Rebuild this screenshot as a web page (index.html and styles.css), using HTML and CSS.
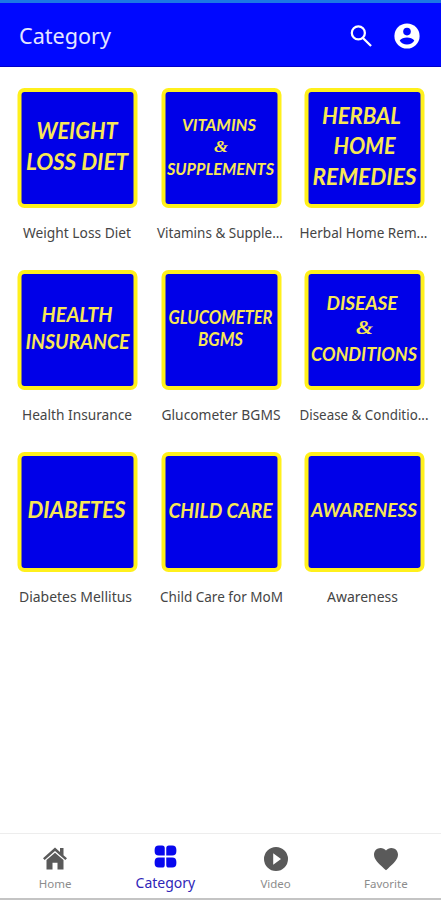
FILE: index.html
```html
<!DOCTYPE html>
<html lang="en">
<head>
<meta charset="utf-8">
<meta name="viewport" content="width=device-width">
<title>Category</title>
<link rel="stylesheet" href="styles.css">
</head>
<body>
<header class="bar">
  <h1><svg class="title" viewBox="0 0 94 36"><text x="1" y="25.500" textLength="92" lengthAdjust="spacingAndGlyphs">Category</text></svg></h1>
  <svg class="search" viewBox="0 0 24 24"><path fill="none" stroke="#fff" stroke-width="2" d="M13.500 13.500 20.500 20.500M15 8.800a5.800 5.800 0 1 1-11.600 0a5.800 5.800 0 0 1 11.600 0z"/></svg>
  <svg class="account" viewBox="0 0 26 26"><circle cx="13" cy="13" r="12.600" fill="#fff"/><circle cx="13" cy="8.600" r="3.800" fill="#0008ff"/><path fill="#0008ff" d="M5.700 17.600c1.200-2 4.600-3 7.300-3s6.100 1 7.300 3c-1.300 2.400-4.200 4-7.300 4s-6-1.600-7.300-4z"/></svg>
</header>
<main class="grid">
  <section class="card">
    <svg class="tile" viewBox="18 88 120 120"><rect class="frame" x="20" y="90" width="116" height="116" rx="5"/><g font-size="23"><text x="37" y="139" textLength="81" lengthAdjust="spacingAndGlyphs">WEIGHT</text><text x="26.500" y="170" textLength="102" lengthAdjust="spacingAndGlyphs">LOSS DIET</text></g></svg>
    <svg class="label" viewBox="6 222 143 24"><text x="23" y="238" textLength="108" lengthAdjust="spacingAndGlyphs">Weight Loss Diet</text></svg>
  </section>
  <section class="card">
    <svg class="tile" viewBox="161.500 88 120 120"><rect class="frame" x="163.500" y="90" width="116" height="116" rx="5"/><g font-size="17"><text x="182" y="130.500" textLength="74" lengthAdjust="spacingAndGlyphs">VITAMINS</text><text class="amp" x="214" y="152" textLength="14" lengthAdjust="spacingAndGlyphs">&amp;</text><text x="167" y="174.500" textLength="107" lengthAdjust="spacingAndGlyphs">SUPPLEMENTS</text></g></svg>
    <svg class="label" viewBox="149.500 222 143 24"><text x="156.500" y="238" textLength="126" lengthAdjust="spacingAndGlyphs">Vitamins &amp; Supple...</text></svg>
  </section>
  <section class="card">
    <svg class="tile" viewBox="304.500 88 120 120"><rect class="frame" x="306.500" y="90" width="116" height="116" rx="5"/><g font-size="22.500"><text x="322" y="123.500" textLength="79" lengthAdjust="spacingAndGlyphs">HERBAL</text><text x="333.500" y="154" textLength="62" lengthAdjust="spacingAndGlyphs">HOME</text><text x="312.500" y="185" textLength="104" lengthAdjust="spacingAndGlyphs">REMEDIES</text></g></svg>
    <svg class="label" viewBox="293 222 143 24"><text x="299.500" y="238" textLength="128" lengthAdjust="spacingAndGlyphs">Herbal Home Rem...</text></svg>
  </section>
  <section class="card">
    <svg class="tile" viewBox="18 270 120 120"><rect class="frame" x="20" y="272" width="116" height="116" rx="5"/><g font-size="20.500"><text x="42" y="322" textLength="71" lengthAdjust="spacingAndGlyphs">HEALTH</text><text x="26" y="348.500" textLength="104" lengthAdjust="spacingAndGlyphs">INSURANCE</text></g></svg>
    <svg class="label" viewBox="6 404 143 24"><text x="22" y="420" textLength="110" lengthAdjust="spacingAndGlyphs">Health Insurance</text></svg>
  </section>
  <section class="card">
    <svg class="tile" viewBox="161.500 270 120 120"><rect class="frame" x="163.500" y="272" width="116" height="116" rx="5"/><g font-size="18"><text x="168.500" y="323.500" textLength="104" lengthAdjust="spacingAndGlyphs">GLUCOMETER</text><text x="198" y="346" textLength="45" lengthAdjust="spacingAndGlyphs">BGMS</text></g></svg>
    <svg class="label" viewBox="149.500 404 143 24"><text x="161" y="420" textLength="119" lengthAdjust="spacingAndGlyphs">Glucometer BGMS</text></svg>
  </section>
  <section class="card">
    <svg class="tile" viewBox="304.500 270 120 120"><rect class="frame" x="306.500" y="272" width="116" height="116" rx="5"/><g font-size="19.500"><text x="326.500" y="309.500" textLength="71" lengthAdjust="spacingAndGlyphs">DISEASE</text><text class="amp" x="356" y="334" textLength="17" lengthAdjust="spacingAndGlyphs">&amp;</text><text x="311" y="361" textLength="106" lengthAdjust="spacingAndGlyphs">CONDITIONS</text></g></svg>
    <svg class="label" viewBox="293 404 143 24"><text x="299.500" y="420" textLength="129" lengthAdjust="spacingAndGlyphs">Disease &amp; Conditio...</text></svg>
  </section>
  <section class="card">
    <svg class="tile" viewBox="18 452 120 120"><rect class="frame" x="20" y="454" width="116" height="116" rx="5"/><g font-size="23"><text x="28" y="518" textLength="98" lengthAdjust="spacingAndGlyphs">DIABETES</text></g></svg>
    <svg class="label" viewBox="6 586 143 24"><text x="19" y="602" textLength="113" lengthAdjust="spacingAndGlyphs">Diabetes Mellitus</text></svg>
  </section>
  <section class="card">
    <svg class="tile" viewBox="161.500 452 120 120"><rect class="frame" x="163.500" y="454" width="116" height="116" rx="5"/><g font-size="20.500"><text x="168.500" y="517.500" textLength="104" lengthAdjust="spacingAndGlyphs">CHILD CARE</text></g></svg>
    <svg class="label" viewBox="149.500 586 143 24"><text x="159.500" y="602" textLength="123" lengthAdjust="spacingAndGlyphs">Child Care for MoM</text></svg>
  </section>
  <section class="card">
    <svg class="tile" viewBox="304.500 452 120 120"><rect class="frame" x="306.500" y="454" width="116" height="116" rx="5"/><g font-size="19.500"><text x="311" y="517" textLength="106" lengthAdjust="spacingAndGlyphs">AWARENESS</text></g></svg>
    <svg class="label" viewBox="293 586 143 24"><text x="327" y="602" textLength="71" lengthAdjust="spacingAndGlyphs">Awareness</text></svg>
  </section>
</main>
<nav class="tabs">
  <a class="tab">
    <svg class="icon" viewBox="0 0 26 26"><path d="M13 1.500 1 12.300 2.700 14.100 13 5 23.300 14.100 25 12.300 21.500 9.200V2H18v4z"/><path d="M13 6.700 4.500 14.100V23.500h6v-6.800h5v6.800h6v-9.400z"/></svg>
    <span>Home</span>
  </a>
  <a class="tab active">
    <svg class="icon" viewBox="0 0 26 26"><path d="M6 1.500h3.500q2.700 0 2.700 2.700v7.800H6q-4.300 0-4.300-4.500V6q0-4.500 4.300-4.500zM20 1.500h-3.500q-2.700 0-2.700 2.700v7.800H20q4.300 0 4.300-4.500V6q0-4.500-4.300-4.500zM6 24.500h3.500q2.700 0 2.700-2.700V14H6q-4.300 0-4.300 4.500V20q0 4.500 4.300 4.500zM20 24.500h-3.500q-2.700 0-2.700-2.700V14H20q4.300 0 4.300 4.500V20q0 4.500-4.300 4.500z"/></svg>
    <span>Category</span>
  </a>
  <a class="tab">
    <svg class="icon" viewBox="0 0 26 26"><path fill-rule="evenodd" d="M13 1a12 12 0 1 0 0 24a12 12 0 0 0 0-24zM10.200 7.200v11.600L18 13z"/></svg>
    <span>Video</span>
  </a>
  <a class="tab">
    <svg class="icon" viewBox="0 0 26 26"><path d="M13 24.300 11.200 22.700C5 17 1 13.400 1 8.600 1 4.800 4 2 7.600 2 9.700 2 11.700 3 13 4.500 14.300 3 16.300 2 18.400 2 22 2 25 4.800 25 8.600c0 4.800-4 8.400-10.200 14.100z"/></svg>
    <span>Favorite</span>
  </a>
</nav>
</body>
</html>
```
FILE: styles.css
```css
* { box-sizing: border-box; }
body {
  margin: 0;
  height: 900px;
  display: flex;
  flex-direction: column;
  overflow: hidden;
  background: #fff;
  font-family: "Noto Sans", sans-serif;
}
svg { display: block; flex: none; overflow: visible; }
.bar {
  height: 67px;
  flex: none;
  display: flex;
  align-items: center;
  padding: 3px 21px 0 18px;
  background: #0008ff;
  border-top: 3px solid #1c78e4;
  border-bottom: 1px solid #0000c8;
}
.bar h1 { margin: 0 auto 0 0; font-weight: 400; }
.title { width: 94px; height: 36px; fill: #e4e6ff; font-size: 22.5px; }
.search { width: 27px; height: 27px; margin-right: 19px; }
.account { width: 26px; height: 26px; }
.grid {
  flex: 1;
  display: grid;
  grid-template-columns: repeat(3, 143px);
  grid-auto-rows: 182px;
  column-gap: 0.5px;
  padding: 21px 0 0 6px;
}
.card { display: flex; flex-direction: column; align-items: center; gap: 14px; }
.tile {
  width: 121px;
  height: 120px;
  fill: #f8e755;
  font-family: Lato, sans-serif;
  font-weight: 700;
  font-style: italic;
}
.frame { fill: #0000e8; stroke: #fff01c; stroke-width: 4px; }
.amp { font-family: "Liberation Serif", serif; }
.label { width: 143px; height: 24px; fill: #454545; font-size: 13.5px; }
.tabs {
  height: 67px;
  flex: none;
  display: grid;
  grid-template-columns: repeat(4, 1fr);
  border-top: 1px solid #ededed;
  border-bottom: 2px solid #c4c4c4;
}
.tab {
  display: flex;
  flex-direction: column;
  align-items: center;
  padding-top: 12px;
  gap: 3px;
  color: #8c8c8c;
  font-size: 11.5px;
  line-height: 18px;
}
.icon { width: 26px; height: 26px; fill: #5a5a5a; }
.tab.active { color: #3025b8; font-size: 14px; padding-top: 10px; gap: 5px; }
.active .icon { fill: #0808ee; width: 25px; height: 25px; }
```
